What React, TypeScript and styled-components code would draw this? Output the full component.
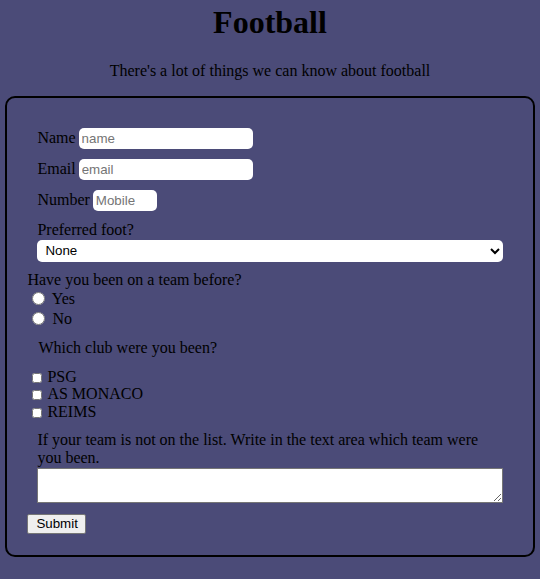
import React from 'react';
import styled, { createGlobalStyle } from 'styled-components';

const GlobalStyle = createGlobalStyle`
  html, body {
    margin: 0;
    padding: 0;
    background: #4b4b78;
    min-height: 100%;
  }
  body {
    font-family: 'Liberation Serif', 'Times New Roman', serif;
    font-size: 16px;
    line-height: 18.4px;
    color: #000;
  }
`;

const Page = styled.div`
  min-height: 579px;
  padding-bottom: 1px;
`;

const Title = styled.h1`
  margin: 4px 0 0;
  font-size: 32px;
  line-height: 37px;
  font-weight: bold;
  text-align: center;
`;

const Subtitle = styled.p`
  margin: 21px 0 16px;
  text-align: center;
`;

const FormBox = styled.form`
  width: 98%;
  margin: 0 auto;
  box-sizing: border-box;
  border: 2px solid #000;
  border-radius: 10px;
  padding: 20px 20px 21px;
  display: flex;
  flex-direction: column;
`;

const Personal = styled.div`
  margin: 10px 10px 0;
  display: flex;
  flex-direction: column;
  gap: 10px;
`;

const FieldRow = styled.div`
  display: flex;
  align-items: baseline;
  gap: 3px;
`;

const TextInput = styled.input<{ $w: number }>`
  width: ${(p) => p.$w}px;
  height: 21px;
  box-sizing: border-box;
  border: none;
  border-radius: 5px;
  padding: 0 3px;
  background: #fff;
  font-family: 'Liberation Sans', Arial, sans-serif;
  font-size: 13.33px;
  outline: none;
  &::placeholder {
    color: #757575;
  }
  &::-webkit-inner-spin-button,
  &::-webkit-outer-spin-button {
    -webkit-appearance: none;
    margin: 0;
  }
  -moz-appearance: textfield;
`;

const Stack = styled.div`
  display: flex;
  flex-direction: column;
`;

const Select = styled.select`
  width: 100%;
  height: 22px;
  border: none;
  border-radius: 5px;
  background: #fff;
  padding: 0 4px;
  font-family: 'Liberation Sans', Arial, sans-serif;
  font-size: 13.33px;
  color: #000;
`;

const Question = styled.div`
  margin-top: 9px;
`;

const RadioRow = styled.label`
  display: block;
  line-height: 20px;
  input {
    width: 13px;
    height: 13px;
    margin: 3px 3px 0 5px;
    vertical-align: -1px;
  }
`;

const ClubTitle = styled.div`
  margin: 10px 0 10px 11px;
`;

const CheckRow = styled.label`
  display: block;
  line-height: 17.7px;
  input {
    width: 10px;
    height: 10px;
    margin: 0 5px 0 5px;
    vertical-align: -1px;
  }
`;

const TeamBlock = styled.div`
  margin: 10px 10px 0;
`;

const TextArea = styled.textarea`
  display: block;
  width: 100%;
  height: 35px;
  box-sizing: border-box;
  border: 1px solid #767676;
  margin: 0;
  background: #fff;
`;

const SubmitButton = styled.button`
  align-self: flex-start;
  margin-top: 11px;
  height: 20px;
  padding: 0 7px 0 8px;
  border: 1px solid #767676;
  border-radius: 2px;
  background: #efefef;
  font-family: 'Liberation Sans', Arial, sans-serif;
  font-size: 13.33px;
  line-height: 18px;
  color: #000;
`;

const clubs = ['PSG', 'AS MONACO', 'REIMS'];

export default function App() {
  return (
    <>
      <GlobalStyle />
      <Page>
        <Title>Football</Title>
        <Subtitle>There's a lot of things we can know about football</Subtitle>
        <FormBox onSubmit={(e) => e.preventDefault()}>
          <Personal>
            <FieldRow>
              <label htmlFor="name">Name</label>
              <TextInput id="name" type="text" placeholder="name" $w={174} />
            </FieldRow>
            <FieldRow>
              <label htmlFor="email">Email</label>
              <TextInput id="email" type="email" placeholder="email" $w={174} />
            </FieldRow>
            <FieldRow>
              <label htmlFor="number">Number</label>
              <TextInput id="number" type="number" placeholder="Mobile" $w={64} />
            </FieldRow>
            <Stack>
              <label htmlFor="foot">Preferred foot?</label>
              <Select id="foot" defaultValue="none">
                <option value="none">None</option>
                <option value="left">Left</option>
                <option value="right">Right</option>
              </Select>
            </Stack>
          </Personal>
          <Question>Have you been on a team before?</Question>
          <RadioRow>
            <input type="radio" name="team" value="yes" /> Yes
          </RadioRow>
          <RadioRow>
            <input type="radio" name="team" value="no" /> No
          </RadioRow>
          <ClubTitle>Which club were you been?</ClubTitle>
          {clubs.map((club) => (
            <CheckRow key={club}>
              <input type="checkbox" value={club} />
              {club}
            </CheckRow>
          ))}
          <TeamBlock>
            <label htmlFor="other">
              If your team is not on the list. Write in the text area which team were you been.
            </label>
            <TextArea id="other" />
          </TeamBlock>
          <SubmitButton type="submit">Submit</SubmitButton>
        </FormBox>
      </Page>
    </>
  );
}
